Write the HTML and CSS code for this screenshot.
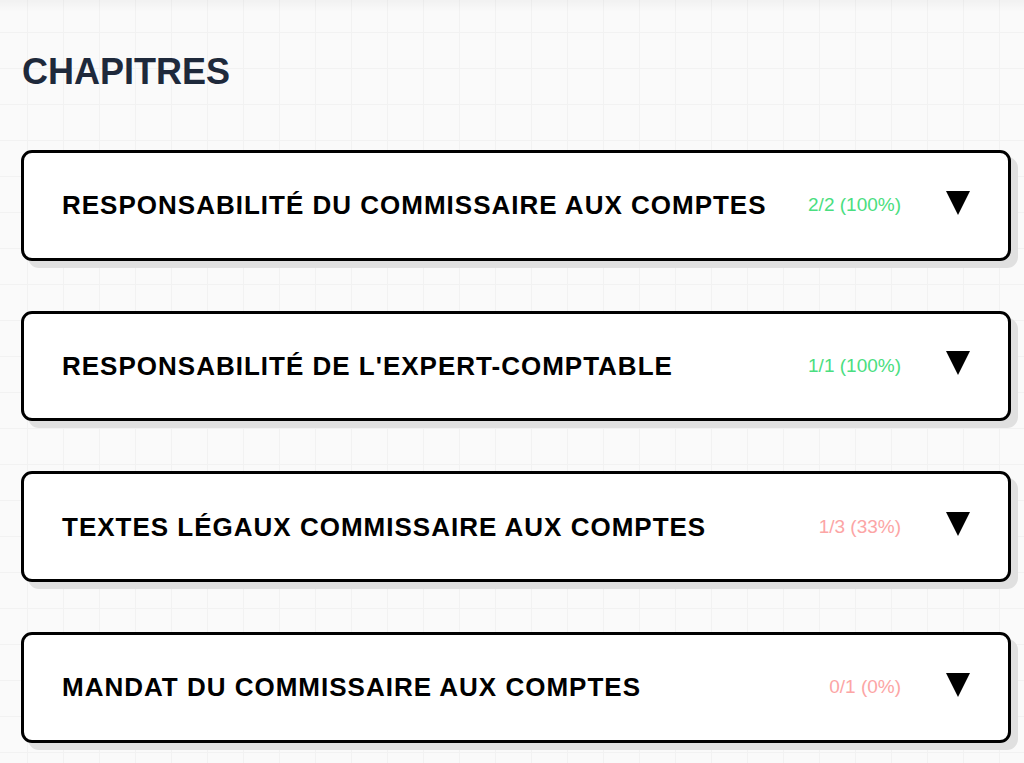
FILE: index.html
```html
<!DOCTYPE html>
<html lang="fr">
<head>
<meta charset="utf-8">
<title>Chapitres</title>
<link rel="stylesheet" href="styles.css">
</head>
<body>
<main class="page">
  <h1 class="page-title">CHAPITRES</h1>
  <div class="chapters">
    <div class="chapter">
      <span class="chapter-name">RESPONSABILITÉ DU COMMISSAIRE AUX COMPTES</span>
      <span class="chapter-stat stat-ok">2/2 (100%)</span>
      <svg class="chevron" viewBox="0 0 24 24" width="24" height="24"><polygon points="0,0 24,0 12,24" fill="#000"/></svg>
    </div>
    <div class="chapter">
      <span class="chapter-name">RESPONSABILITÉ DE L'EXPERT-COMPTABLE</span>
      <span class="chapter-stat stat-ok">1/1 (100%)</span>
      <svg class="chevron" viewBox="0 0 24 24" width="24" height="24"><polygon points="0,0 24,0 12,24" fill="#000"/></svg>
    </div>
    <div class="chapter">
      <span class="chapter-name">TEXTES LÉGAUX COMMISSAIRE AUX COMPTES</span>
      <span class="chapter-stat stat-low">1/3 (33%)</span>
      <svg class="chevron" viewBox="0 0 24 24" width="24" height="24"><polygon points="0,0 24,0 12,24" fill="#000"/></svg>
    </div>
    <div class="chapter">
      <span class="chapter-name">MANDAT DU COMMISSAIRE AUX COMPTES</span>
      <span class="chapter-stat stat-low">0/1 (0%)</span>
      <svg class="chevron" viewBox="0 0 24 24" width="24" height="24"><polygon points="0,0 24,0 12,24" fill="#000"/></svg>
    </div>
  </div>
</main>
</body>
</html>
```
FILE: styles.css
```css
html, body {
  margin: 0;
  padding: 0;
}
body {
  min-height: 763px;
  font-family: "Liberation Sans", Arial, Helvetica, sans-serif;
  background-color: #fafafa;
  background-image:
    linear-gradient(to bottom, rgba(0,0,0,0.035), rgba(0,0,0,0) 12px),
    linear-gradient(to right, #f2f2f2 1px, transparent 1px),
    linear-gradient(to bottom, #f2f2f2 1px, transparent 1px);
  background-size: 100% 12px, 36px 36px, 36px 36px;
  background-position: 0 0, 27px 32px, 27px 32px;
  background-repeat: no-repeat, repeat, repeat;
}
.page {
  padding: 54px 13px 0 21px;
}
.page-title {
  margin: 0;
  padding-left: 1px;
  font-size: 36px;
  line-height: 36px;
  font-weight: 700;
  color: #1e293b;
}
.chapters {
  margin-top: 60px;
  display: flex;
  flex-direction: column;
  gap: 50px;
}
.chapter {
  box-sizing: border-box;
  height: 110.67px;
  display: flex;
  align-items: center;
  padding: 0 38px;
  background: #fff;
  border: 3px solid #000;
  border-radius: 11px;
  box-shadow: 7px 7px 0 #e0e0e0;
}
.chapter-name {
  flex: 1;
  font-size: 26px;
  font-weight: 700;
  letter-spacing: 1px;
  color: #000;
  line-height: 30px;
}
.chapter-stat {
  font-size: 19px;
  line-height: 30px;
  margin-right: 45px;
}
.stat-ok {
  color: #4ade80;
}
.stat-low {
  color: #fca5a5;
}
.chevron {
  display: block;
  flex: none;
  margin-top: -5px;
}
```
